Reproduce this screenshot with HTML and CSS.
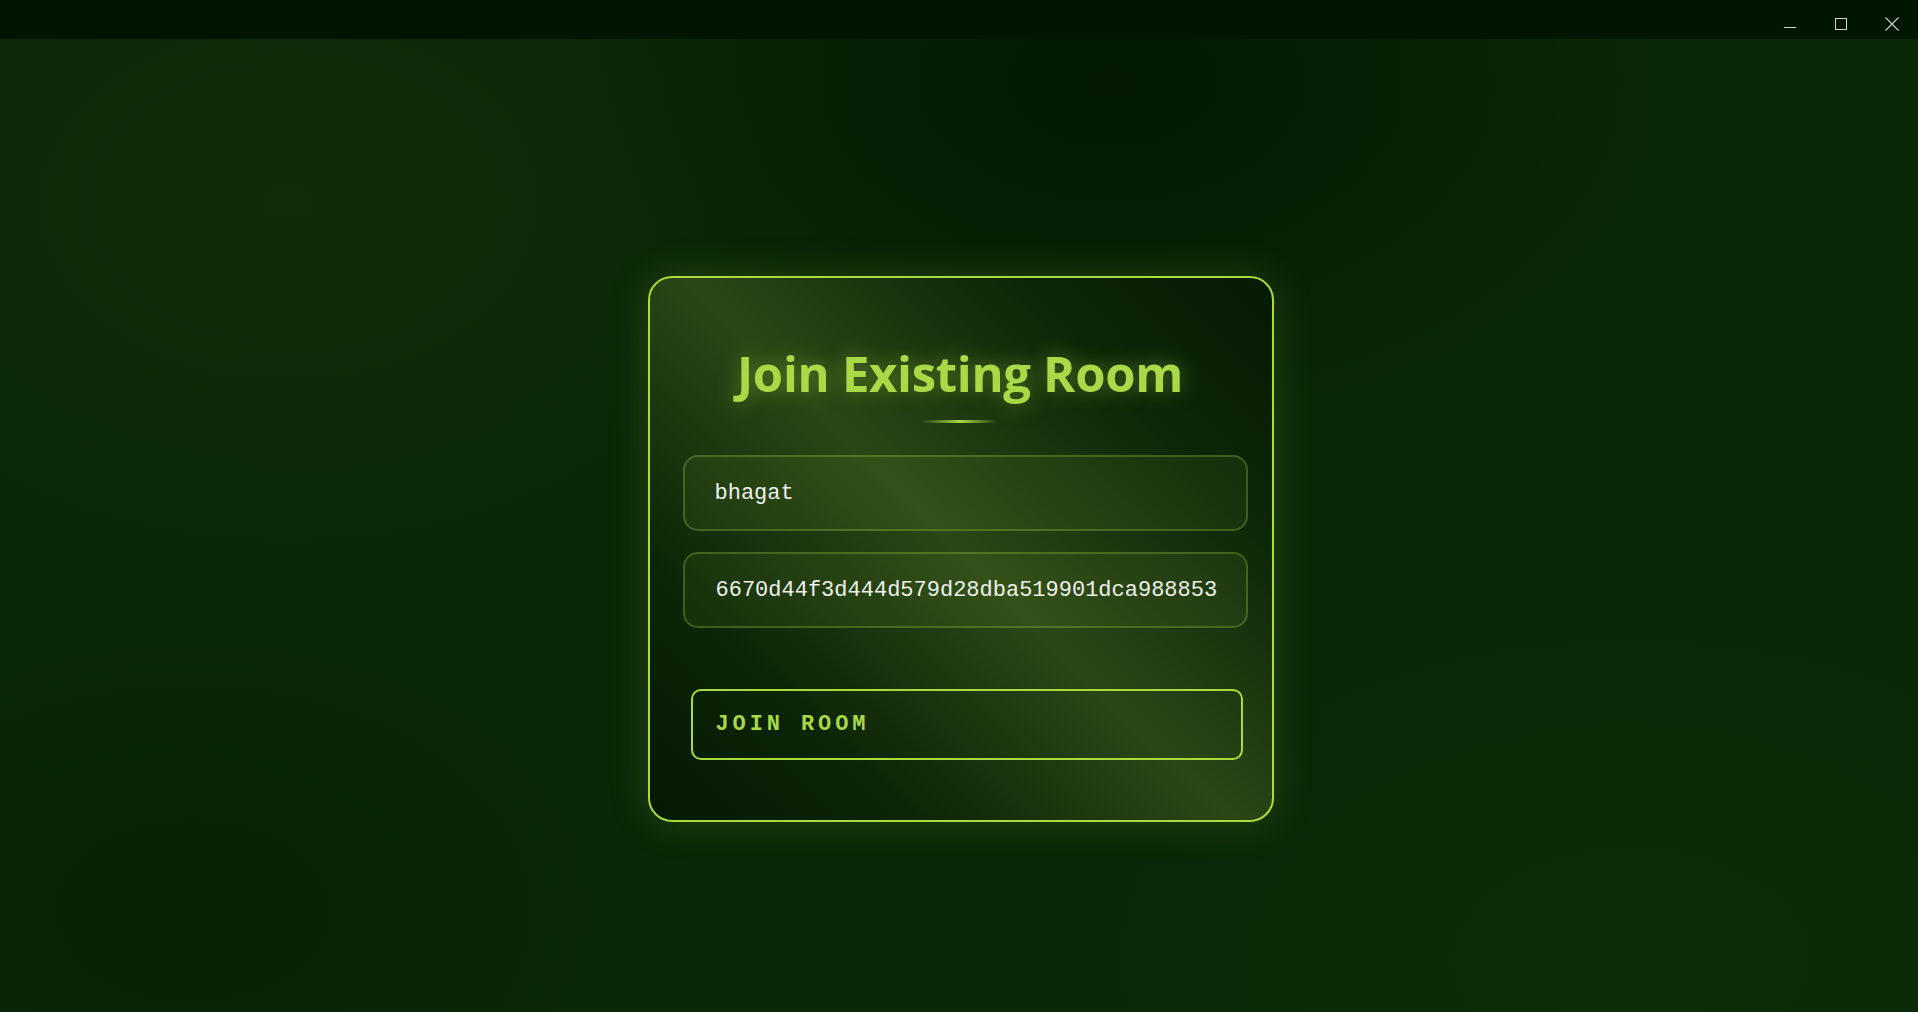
FILE: index.html
```html
<!DOCTYPE html>
<html lang="en">
<head>
<meta charset="utf-8">
<title>Join Existing Room</title>
<link rel="stylesheet" href="styles.css">
</head>
<body>
  <header class="titlebar">
    <div class="controls">
      <button class="ctrl" aria-label="Minimize">
        <svg width="12" height="12" viewBox="0 0 12 12"><path d="M0 9.5H12" stroke="#cfd3cf" stroke-width="1"/></svg>
      </button>
      <button class="ctrl" aria-label="Maximize">
        <svg width="14" height="14" viewBox="0 0 14 14"><rect x="1.5" y="1.5" width="11" height="11" fill="none" stroke="#cfd3cf" stroke-width="1"/></svg>
      </button>
      <button class="ctrl" aria-label="Close">
        <svg width="14" height="14" viewBox="0 0 14 14"><path d="M0.5 0.5L13.5 13.5M13.5 0.5L0.5 13.5" stroke="#cfd3cf" stroke-width="1.1"/></svg>
      </button>
    </div>
  </header>
  <main class="stage">
    <section class="card">
      <h1 class="title">Join Existing Room</h1>
      <div class="divider"></div>
      <input class="field" type="text" value="bhagat">
      <input class="field field-second" type="text" value="6670d44f3d444d579d28dba519901dca988853">
      <button class="join">JOIN ROOM</button>
    </section>
  </main>
</body>
</html>
```

FILE: styles.css
```css
* { box-sizing: border-box; }

html, body {
  margin: 0;
  padding: 0;
  height: 100%;
}

body {
  display: flex;
  flex-direction: column;
  min-height: 1012px;
  overflow: hidden;
  font-family: "Open Sans", "Noto Sans", sans-serif;
  background:
    radial-gradient(ellipse 700px 500px at 15% 20%, rgba(22, 48, 14, 0.55), transparent 70%),
    radial-gradient(ellipse 800px 500px at 58% 8%, rgba(0, 20, 0, 0.75), transparent 70%),
    radial-gradient(ellipse 800px 500px at 85% 95%, rgba(14, 52, 10, 0.5), transparent 70%),
    radial-gradient(ellipse 600px 400px at 10% 90%, rgba(2, 24, 2, 0.45), transparent 70%),
    #0a2707;
}

.titlebar {
  height: 39px;
  flex: 0 0 39px;
  background: #011601;
  display: flex;
  justify-content: flex-end;
}

.controls {
  display: flex;
  margin-right: 1px;
}

.ctrl {
  width: 51px;
  height: 39px;
  border: 0;
  padding: 8px 0 0;
  background: transparent;
  display: flex;
  align-items: center;
  justify-content: center;
}

.stage {
  flex: 1;
  display: flex;
  align-items: center;
  justify-content: center;
  padding-top: 47px;
  padding-left: 3px;
}

.card {
  width: 626px;
  height: 546px;
  border: 2px solid #a9da3e;
  border-radius: 24px;
  padding: 66px 24px 0 33px;
  display: flex;
  flex-direction: column;
  background: linear-gradient(45deg, #051803 0%, #0c2507 22%, #2b4716 50%, #0d2608 78%, #061a03 100%);
  box-shadow: 0 0 40px rgba(166, 216, 67, 0.18);
}

.title {
  margin: 0 0 0 -10px;
  font-size: 49px;
  line-height: 58px;
  font-weight: 700;
  text-align: center;
  color: #aad947;
  text-shadow: 0 0 22px rgba(166, 216, 67, 0.45);
  letter-spacing: -0.3px;
}

.divider {
  width: 76px;
  height: 3px;
  margin: 18px auto 32px;
  position: relative;
  left: -5px;
  background: linear-gradient(90deg, rgba(166, 216, 67, 0) 0%, #a6d843 50%, rgba(166, 216, 67, 0) 100%);
}

.field {
  width: 565px;
  height: 76px;
  border: 2px solid rgba(166, 216, 67, 0.28);
  border-radius: 15px;
  background: rgba(166, 216, 67, 0.07);
  padding: 0 20px 0 30px;
  font-family: "Liberation Mono", "Courier New", monospace;
  font-size: 22px;
  color: #eef0ea;
  outline: none;
}

.field-second {
  margin-top: 21px;
  padding-left: 31px;
}

.join {
  margin: 61px 5px 0 8px;
  height: 71px;
  border: 2px solid #a9da3e;
  border-radius: 10px;
  background: transparent;
  text-align: left;
  padding: 0 0 0 23px;
  font-family: "Liberation Mono", "Courier New", monospace;
  font-weight: 700;
  font-size: 22px;
  letter-spacing: 3.9px;
  color: #a9d846;
}
```
